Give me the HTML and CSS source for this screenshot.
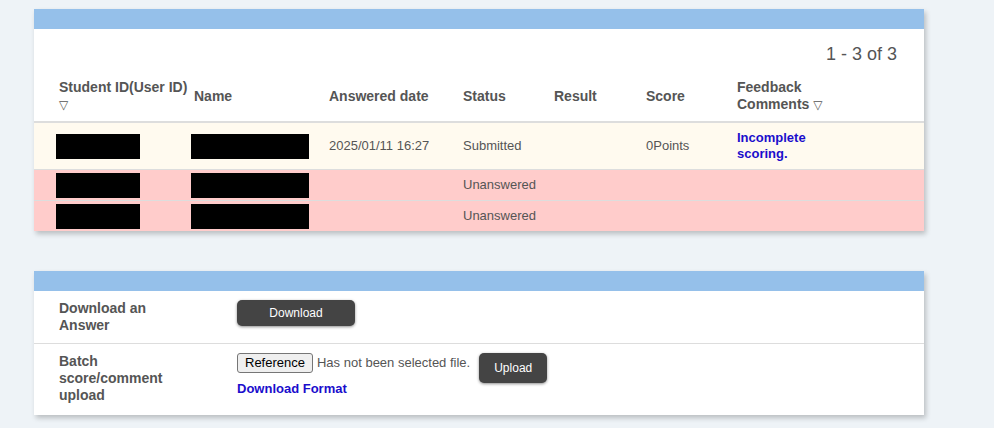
FILE: index.html
```html
<!DOCTYPE html>
<html lang="en">
<head>
<meta charset="utf-8">
<title>Answers</title>
<link rel="stylesheet" href="styles.css">
</head>
<body>
<div class="page">
  <section class="panel">
    <div class="panel-head"></div>
    <div class="pager">1 - 3 of 3</div>
    <table class="answers">
      <colgroup>
        <col class="c-id"><col class="c-name"><col class="c-date"><col class="c-status"><col class="c-result"><col class="c-score"><col class="c-fb"><col class="c-rest">
      </colgroup>
      <thead>
        <tr>
          <th class="first">Student ID(User ID)<br><span class="sort">▽</span></th>
          <th>Name</th>
          <th>Answered date</th>
          <th>Status</th>
          <th>Result</th>
          <th>Score</th>
          <th>Feedback<br>Comments <span class="sort">▽</span></th>
          <th></th>
        </tr>
      </thead>
      <tbody>
        <tr class="done">
          <td class="first"><span class="redact r-id"></span></td>
          <td><span class="redact r-name"></span></td>
          <td>2025/01/11 16:27</td>
          <td>Submitted</td>
          <td></td>
          <td>0Points</td>
          <td><a class="link" href="#">Incomplete<br>scoring.</a></td>
          <td></td>
        </tr>
        <tr class="none">
          <td class="first"><span class="redact r-id"></span></td>
          <td><span class="redact r-name"></span></td>
          <td></td>
          <td>Unanswered</td>
          <td></td>
          <td></td>
          <td></td>
          <td></td>
        </tr>
        <tr class="none">
          <td class="first"><span class="redact r-id"></span></td>
          <td><span class="redact r-name"></span></td>
          <td></td>
          <td>Unanswered</td>
          <td></td>
          <td></td>
          <td></td>
          <td></td>
        </tr>
      </tbody>
    </table>
  </section>

  <section class="panel panel-tools">
    <div class="panel-head"></div>
    <div class="tool-row">
      <div class="tool-label">Download an<br>Answer</div>
      <div class="tool-value">
        <button class="dark-btn btn-download" type="button">Download</button>
      </div>
    </div>
    <div class="tool-row last">
      <div class="tool-label">Batch<br>score/comment<br>upload</div>
      <div class="tool-value">
        <div class="file-line">
          <button class="file-btn" type="button">Reference</button>
          <span class="file-text">Has not been selected file.</span>
          <button class="dark-btn btn-upload" type="button">Upload</button>
        </div>
        <a class="link format-link" href="#">Download Format</a>
      </div>
    </div>
  </section>
</div>
</body>
</html>
```

FILE: styles.css
```css
html, body {
  margin: 0;
  padding: 0;
  background: #eef3f7;
}
body {
  font-family: "Liberation Sans", Arial, sans-serif;
  color: #555;
  font-size: 13px;
}
.page {
  padding: 9px 0 20px 34px;
}
.panel {
  width: 890px;
  background: #fff;
  box-shadow: 2px 3px 5px rgba(0, 0, 0, 0.22);
}
.panel-tools {
  margin-top: 40px;
}
.panel-head {
  height: 20px;
  background: #95c0ea;
}
.pager {
  text-align: right;
  font-size: 18px;
  line-height: 24px;
  padding: 13px 27px 6px 0;
  color: #555;
}
.answers {
  width: 890px;
  border-collapse: collapse;
  table-layout: fixed;
}
.c-id { width: 155px; }
.c-name { width: 135px; }
.c-date { width: 134px; }
.c-status { width: 91px; }
.c-result { width: 92px; }
.c-score { width: 91px; }
.c-fb { width: 110px; }
.c-rest { width: 82px; }
.answers th {
  text-align: left;
  font-size: 14px;
  font-weight: bold;
  line-height: 17px;
  padding: 7px 0 7px 5px;
  vertical-align: middle;
  border-bottom: 2px solid #ddd;
  white-space: nowrap;
  color: #555;
}
.answers th.first,
.answers td.first {
  padding-left: 25px;
}
.sort {
  font-size: 12px;
  font-family: "DejaVu Sans", sans-serif;
  font-weight: bold;
  line-height: 17px;
}
.answers td {
  padding: 7px 0 7px 5px;
  line-height: 16px;
  vertical-align: middle;
  border-bottom: 1px solid #ddd;
  white-space: nowrap;
}
.answers tbody tr:last-child td {
  border-bottom: none;
}
tr.done td { background: #fffaef; }
tr.none td { background: #ffcccb; }
.redact {
  display: block;
  height: 25px;
  margin: -4px 0 -5px -3px;
  background: #000;
}
.r-id { width: 84px; }
.r-name { width: 118px; }
.link {
  color: #1a0dcc;
  font-weight: bold;
  text-decoration: none;
}
.tool-row {
  display: grid;
  grid-template-columns: 198px 1fr;
  border-bottom: 1px solid #ddd;
}
.tool-row.last {
  border-bottom: none;
}
.tool-label {
  padding: 9px 5px 9px 25px;
  font-size: 14px;
  font-weight: bold;
  line-height: 17px;
  color: #555;
}
.tool-row.last .tool-label {
  padding-bottom: 11px;
}
.tool-value {
  padding: 9px 5px;
}
.dark-btn {
  background: #444;
  color: #fff;
  border: none;
  border-radius: 5px;
  font-family: "Liberation Sans", Arial, sans-serif;
  font-size: 12px;
  box-shadow: 0 1px 3px rgba(0, 0, 0, 0.45);
  padding: 0 15px;
  cursor: pointer;
}
.btn-download {
  width: 118px;
  height: 26px;
  display: block;
}
.btn-upload {
  height: 30px;
  margin-left: 9px;
}
.file-line {
  display: flex;
  align-items: flex-start;
}
.file-btn {
  height: 20px;
  padding: 0 7px;
  border: 1px solid #767676;
  border-radius: 3px;
  background: #efefef;
  color: #000;
  font-family: "Liberation Sans", Arial, sans-serif;
  font-size: 13px;
  line-height: 18px;
}
.file-text {
  margin-left: 4px;
  line-height: 20px;
  font-size: 13px;
  color: #555;
}
.format-link {
  display: block;
  font-size: 13px;
  line-height: 16px;
  margin-top: -2px;
}
```
